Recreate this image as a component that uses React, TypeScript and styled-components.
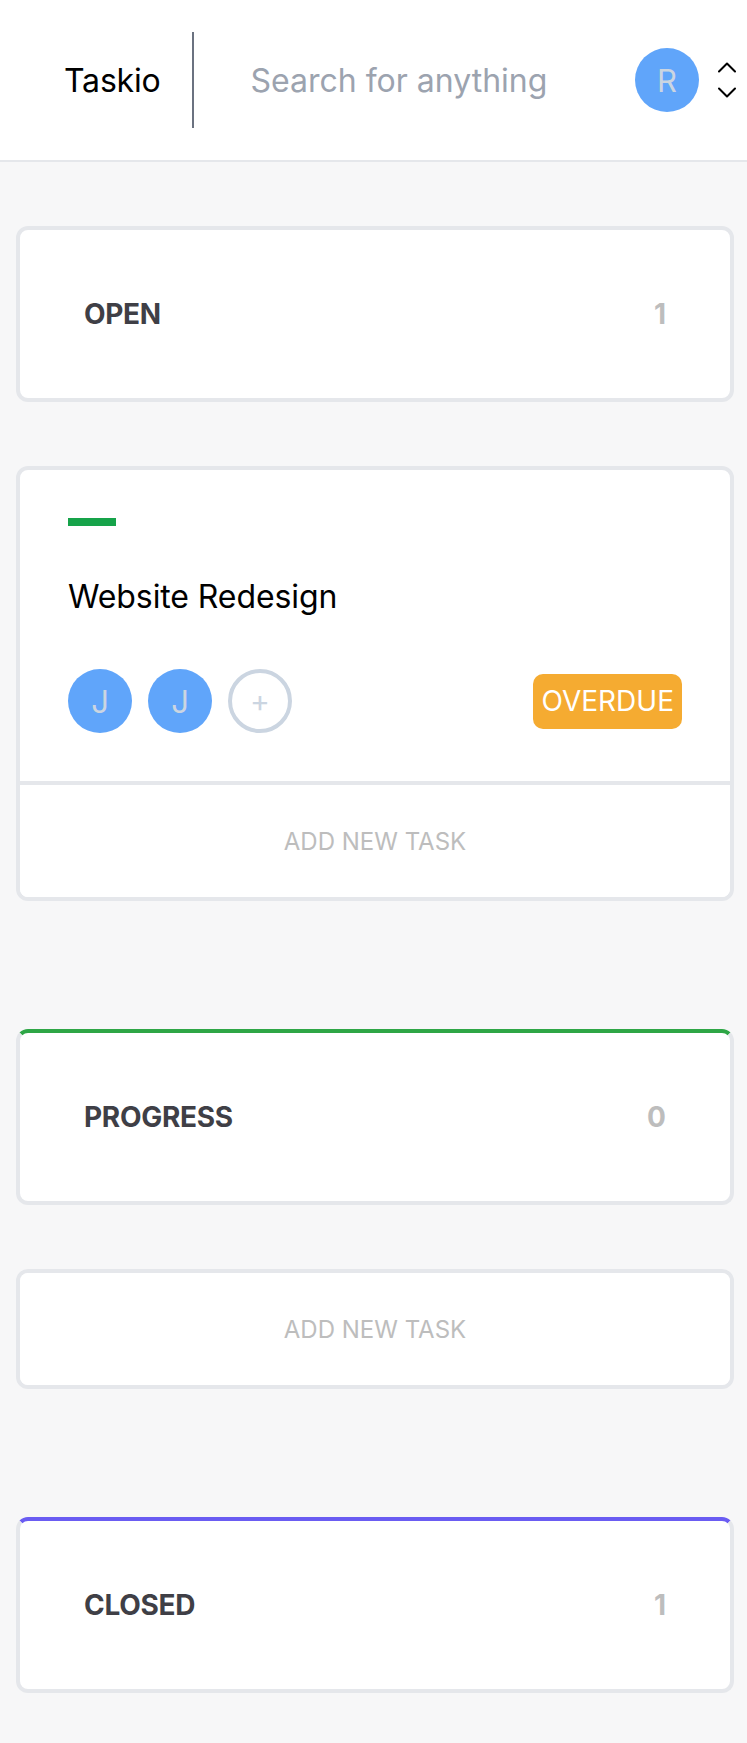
import React from "react";
import styled, { createGlobalStyle } from "styled-components";

const GlobalStyle = createGlobalStyle`
  html, body {
    margin: 0;
    padding: 0;
    background-color: #f7f7f8;
    font-family: Inter, "Noto Sans", "Liberation Sans", sans-serif;
  }

  * {
    box-sizing: border-box;
  }
`;

const Page = styled.div`
  min-height: 100vh;
  background-color: #f7f7f8;
`;

const TopBar = styled.header`
  display: flex;
  align-items: center;
  height: 162px;
  padding: 0 11px 0 64px;
  background-color: #ffffff;
  border-bottom: 2px solid #e5e7eb;
`;

const Logo = styled.div`
  font-size: 32px;
  font-weight: 400;
  color: #000000;
  letter-spacing: -0.2px;
`;

const Divider = styled.div`
  width: 2px;
  height: 96px;
  margin: 0 56px 0 32px;
  background-color: #6b7280;
`;

const SearchInput = styled.input`
  flex: 1;
  min-width: 0;
  border: none;
  outline: none;
  background: transparent;
  padding: 0;
  font-family: inherit;
  font-size: 32px;
  color: #111827;

  &::placeholder {
    color: #9ca3af;
  }
`;

const Avatar = styled.div<{ $outline?: boolean }>`
  display: flex;
  align-items: center;
  justify-content: center;
  flex-shrink: 0;
  width: 64px;
  height: 64px;
  border-radius: 50%;
  font-size: ${(props) => (props.$outline ? "30px" : "31px")};
  font-weight: 400;
  color: #cbd5e1;
  background-color: ${(props) => (props.$outline ? "#ffffff" : "#60a5fa")};
  border: ${(props) => (props.$outline ? "4px solid #cbd5e1" : "none")};
`;

const SortToggle = styled.button`
  display: flex;
  margin-left: 19px;
  padding: 0;
  border: none;
  background: none;
  color: #000000;
`;

const Board = styled.main`
  display: flex;
  flex-direction: column;
  gap: 128px;
  padding: 64px 13px 49px 16px;
`;

const Column = styled.section`
  display: flex;
  flex-direction: column;
  gap: 64px;
`;

const ColumnHeader = styled.div<{ $accent: string }>`
  display: flex;
  align-items: center;
  justify-content: space-between;
  height: 176px;
  padding: 0 64px;
  background-color: #ffffff;
  border: 4px solid #e5e7eb;
  border-top-color: ${(props) => props.$accent};
  border-radius: 12px;
`;

const ColumnTitle = styled.h2`
  margin: 0;
  font-size: 28px;
  font-weight: 700;
  color: #3f3f46;
  letter-spacing: -0.3px;
`;

const ColumnCount = styled.span`
  font-size: 28px;
  font-weight: 700;
  color: #bdbdbd;
`;

const TaskCard = styled.div`
  background-color: #ffffff;
  border: 4px solid #e5e7eb;
  border-radius: 12px;
  overflow: hidden;
`;

const TaskBody = styled.div`
  padding: 48px;
`;

const Label = styled.div<{ $color: string }>`
  width: 48px;
  height: 8px;
  background-color: ${(props) => props.$color};
`;

const TaskTitle = styled.h3`
  margin: 47px 0 48px;
  font-size: 32px;
  font-weight: 400;
  line-height: 48px;
  color: #000000;
  letter-spacing: -0.1px;
`;

const TaskMeta = styled.div`
  display: flex;
  align-items: center;
  justify-content: space-between;
`;

const Assignees = styled.div`
  display: flex;
  gap: 16px;
`;

const Badge = styled.span<{ $color: string }>`
  padding: 6px 8px;
  line-height: 43px;
  font-size: 28px;
  font-weight: 400;
  color: #ffffff;
  background-color: ${(props) => props.$color};
  border-radius: 10px;
`;

const AddTask = styled.button<{ $divided?: boolean }>`
  display: flex;
  align-items: center;
  justify-content: center;
  width: 100%;
  height: ${(props) => (props.$divided ? "116px" : "112px")};
  padding: 0;
  border: none;
  border-top: ${(props) => (props.$divided ? "4px solid #e5e7eb" : "none")};
  background-color: #ffffff;
  font-family: inherit;
  font-size: 24px;
  font-weight: 400;
  color: #bdbdbd;
`;

const ChevronsIcon = () => (
  <svg width="18" height="36" viewBox="0 0 18 36" fill="none">
    <polyline
      points="1,9.5 9,1.5 17,9.5"
      stroke="currentColor"
      strokeWidth="2"
      strokeLinecap="round"
      strokeLinejoin="round"
    />
    <polyline
      points="1,26.5 9,34.5 17,26.5"
      stroke="currentColor"
      strokeWidth="2"
      strokeLinecap="round"
      strokeLinejoin="round"
    />
  </svg>
);

interface Task {
  title: string;
  label: string;
  assignees: string[];
  status?: { text: string; color: string };
}

interface ColumnData {
  name: string;
  accent: string;
  count: number;
  tasks: Task[];
  showAdd: boolean;
}

const columns: ColumnData[] = [
  {
    name: "OPEN",
    accent: "#e5e7eb",
    count: 1,
    tasks: [
      {
        title: "Website Redesign",
        label: "#16a34a",
        assignees: ["J", "J"],
        status: { text: "OVERDUE", color: "#f5ab31" },
      },
    ],
    showAdd: true,
  },
  { name: "PROGRESS", accent: "#2ea646", count: 0, tasks: [], showAdd: true },
  { name: "CLOSED", accent: "#6a5cf2", count: 1, tasks: [], showAdd: false },
];

const App: React.FC = () => {
  return (
    <Page>
      <GlobalStyle />
      <TopBar>
        <Logo>Taskio</Logo>
        <Divider />
        <SearchInput placeholder="Search for anything" />
        <Avatar>R</Avatar>
        <SortToggle aria-label="Switch workspace">
          <ChevronsIcon />
        </SortToggle>
      </TopBar>

      <Board>
        {columns.map((column) => (
          <Column key={column.name}>
            <ColumnHeader $accent={column.accent}>
              <ColumnTitle>{column.name}</ColumnTitle>
              <ColumnCount>{column.count}</ColumnCount>
            </ColumnHeader>
            {column.showAdd && (
              <TaskCard>
                {column.tasks.map((task) => (
                  <TaskBody key={task.title}>
                    <Label $color={task.label} />
                    <TaskTitle>{task.title}</TaskTitle>
                    <TaskMeta>
                      <Assignees>
                        {task.assignees.map((initial, i) => (
                          <Avatar key={i}>{initial}</Avatar>
                        ))}
                        <Avatar $outline>+</Avatar>
                      </Assignees>
                      {task.status && (
                        <Badge $color={task.status.color}>
                          {task.status.text}
                        </Badge>
                      )}
                    </TaskMeta>
                  </TaskBody>
                ))}
                <AddTask $divided={column.tasks.length > 0}>
                  ADD NEW TASK
                </AddTask>
              </TaskCard>
            )}
          </Column>
        ))}
      </Board>
    </Page>
  );
};

export default App;
